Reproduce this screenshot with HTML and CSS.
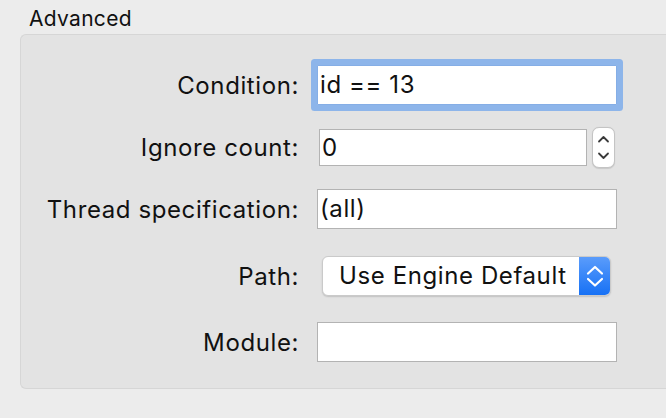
FILE: index.html
```html
<!DOCTYPE html>
<html>
<head>
<meta charset="utf-8">
<link rel="stylesheet" href="styles.css">
</head>
<body>
<div class="title">Advanced</div>
<div class="box">
  <div class="row">
    <div class="label">Condition:</div>
    <div class="field focused">id == 13</div>
  </div>
  <div class="row">
    <div class="label">Ignore count:</div>
    <div class="field count">0</div>
    <div class="stepper">
      <svg width="23" height="41" viewBox="0 0 23 41">
        <path d="M7 14.5 L11.5 10 L16 14.5" fill="none" stroke="#3a3a3a" stroke-width="1.8" stroke-linecap="round" stroke-linejoin="round"/>
        <path d="M7 26.5 L11.5 31 L16 26.5" fill="none" stroke="#3a3a3a" stroke-width="1.8" stroke-linecap="round" stroke-linejoin="round"/>
      </svg>
    </div>
  </div>
  <div class="row">
    <div class="label">Thread specification:</div>
    <div class="field">(all)</div>
  </div>
  <div class="row row-path">
    <div class="label">Path:</div>
    <div class="popup">
      <div class="popup-text">Use Engine Default</div>
      <div class="popup-arrows">
        <svg width="32" height="40" viewBox="0 0 32 40">
          <path d="M9 17.5 L16 11 L23 17.5" fill="none" stroke="#ffffff" stroke-width="2.2" stroke-linecap="round" stroke-linejoin="round"/>
          <path d="M9 23 L16 29.5 L23 23" fill="none" stroke="#ffffff" stroke-width="2.2" stroke-linecap="round" stroke-linejoin="round"/>
        </svg>
      </div>
    </div>
  </div>
  <div class="row row-module">
    <div class="label">Module:</div>
    <div class="field"></div>
  </div>
</div>
</body>
</html>
```

FILE: styles.css
```css
html, body {
  margin: 0;
  padding: 0;
}
body {
  background: #ececec;
  width: 666px;
  height: 418px;
  overflow: hidden;
  font-family: Inter, "Liberation Sans", sans-serif;
  color: #111111;
}
.title {
  height: 34px;
  padding-left: 29px;
  font-size: 21px;
  letter-spacing: 0.3px;
  line-height: 38px;
  box-sizing: border-box;
}
.box {
  margin-left: 20px;
  width: 660px;
  height: 355px;
  box-sizing: border-box;
  background: #e3e3e3;
  border: 1px solid #d6d6d6;
  border-right: none;
  border-radius: 6px 0 0 6px;
  padding-top: 30px;
  display: flex;
  flex-direction: column;
  gap: 22px;
}
.row {
  display: flex;
  align-items: center;
  height: 40px;
}
.row-path {
  margin-top: 5px;
}
.row-module {
  margin-top: 4px;
}
.label {
  width: 278px;
  text-align: right;
  font-size: 24px;
  letter-spacing: 0.6px;
  margin-right: 18px;
  white-space: nowrap;
}
.field {
  width: 300px;
  height: 40px;
  box-sizing: border-box;
  background: #ffffff;
  border: 1px solid #b3b3b3;
  font-size: 24px;
  letter-spacing: 0.6px;
  line-height: 38px;
  padding-left: 2px;
  white-space: nowrap;
}
.field.focused {
  height: 40px;
  border-color: #85aee6;
  box-shadow: 0 0 0 6px #8db5ea;
  border-radius: 1px;
}
.field.count {
  margin-left: 2px;
  width: 268px;
  height: 37px;
  line-height: 35px;
}
.stepper {
  margin-left: 5px;
  width: 23px;
  height: 41px;
  box-sizing: border-box;
  background: #ffffff;
  border: 1px solid #c4c4c4;
  border-radius: 7px;
  box-shadow: 0 0.5px 1px rgba(0,0,0,0.12);
  display: flex;
  align-items: center;
  justify-content: center;
}
.stepper svg {
  display: block;
  margin: -1px;
}
.popup {
  margin-left: 5px;
  width: 289px;
  height: 40px;
  box-sizing: border-box;
  display: flex;
  background: #ffffff;
  border: 1px solid #cacaca;
  border-radius: 6px;
  box-shadow: 0 1px 1.5px rgba(0,0,0,0.15);
  overflow: hidden;
}
.popup-text {
  flex: 1;
  font-size: 24px;
  letter-spacing: 0.6px;
  line-height: 38px;
  padding-left: 16px;
  white-space: nowrap;
}
.popup-arrows {
  width: 32px;
  height: 40px;
  margin-top: -1px;
  margin-right: -1px;
  background: linear-gradient(#5c9dfb, #1570f5);
  display: flex;
  align-items: center;
  justify-content: center;
}
.popup-arrows svg {
  display: block;
}
```
